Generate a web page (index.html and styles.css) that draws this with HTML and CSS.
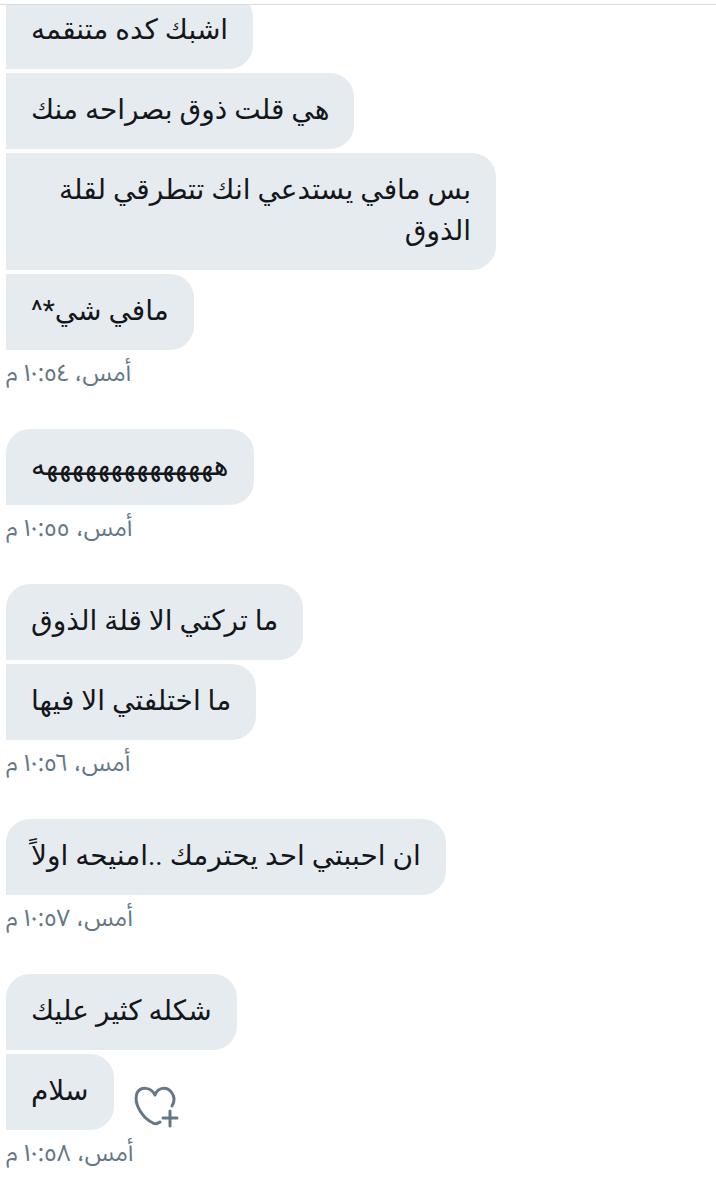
FILE: index.html
```html
<!DOCTYPE html>
<html lang="ar" dir="rtl">
<head>
<meta charset="utf-8">
<meta name="viewport" content="width=device-width, initial-scale=1">
<title>الرسائل</title>
<link rel="stylesheet" href="styles.css">
</head>
<body>
<main class="thread">
  <section class="group clipped">
    <p class="bubble">اشبك كده متنقمه</p>
    <p class="bubble">هي قلت ذوق بصراحه منك</p>
    <p class="bubble">بس مافي يستدعي انك تتطرقي لقلة الذوق</p>
    <p class="bubble">مافي شي*^</p>
    <time class="stamp">أمس، ١٠:٥٤ م</time>
  </section>
  <section class="group">
    <p class="bubble first">ههههههههههههههه</p>
    <time class="stamp">أمس، ١٠:٥٥ م</time>
  </section>
  <section class="group">
    <p class="bubble first">ما تركتي الا قلة الذوق</p>
    <p class="bubble">ما اختلفتي الا فيها</p>
    <time class="stamp">أمس، ١٠:٥٦ م</time>
  </section>
  <section class="group">
    <p class="bubble first">ان احببتي احد يحترمك ..امنيحه اولاً</p>
    <time class="stamp">أمس، ١٠:٥٧ م</time>
  </section>
  <section class="group">
    <p class="bubble first">شكله كثير عليك</p>
    <div class="row">
      <button class="react" type="button" aria-label="إضافة تفاعل">
        <svg class="icon" viewBox="0 0 48 44" aria-hidden="true"><path d="M38 20C41 15 40 10 38 7C33 0 24 1 21 9C17 1 7 0 3 7C-1 19 10 33 19 37Q22 39 26 36M36 25V40M29 32H43"/></svg>
      </button>
      <p class="bubble">سلام</p>
    </div>
    <time class="stamp">أمس، ١٠:٥٨ م</time>
  </section>
</main>
</body>
</html>
```
FILE: styles.css
```css
* { box-sizing: border-box; }
body {
  margin: 0;
  background: #fff;
  color: #14171a;
  font-family: Roboto, "DejaVu Sans", sans-serif;
}
.thread {
  margin-top: 4px;
  padding: 0 6px;
  border-top: 1px solid #d5dbdf;
  overflow: hidden;
}
.group {
  display: flex;
  flex-direction: column;
  align-items: flex-end;
  gap: 4px;
  margin-bottom: 39px;
}
.clipped { margin-top: -12px; }
.bubble {
  margin: 0;
  max-width: 490px;
  padding: 16px 25px 19px;
  background: #e6ebef;
  border-radius: 0 24px 24px 0;
  font-size: 28px;
  line-height: 41px;
}
.first { border-top-left-radius: 24px; }
.row { display: flex; align-items: flex-end; gap: 20px; }
.react { padding: 0; border: 0; background: none; }
.icon {
  display: block;
  width: 48px;
  height: 44px;
  fill: none;
  stroke: #657786;
  stroke-width: 3;
  stroke-linecap: round;
  stroke-linejoin: round;
}
.stamp {
  color: #657786;
  font-family: "Noto Sans Arabic UI", "Noto Sans Arabic", Roboto, "DejaVu Sans", sans-serif;
  font-size: 24px;
  line-height: 36px;
}
```
